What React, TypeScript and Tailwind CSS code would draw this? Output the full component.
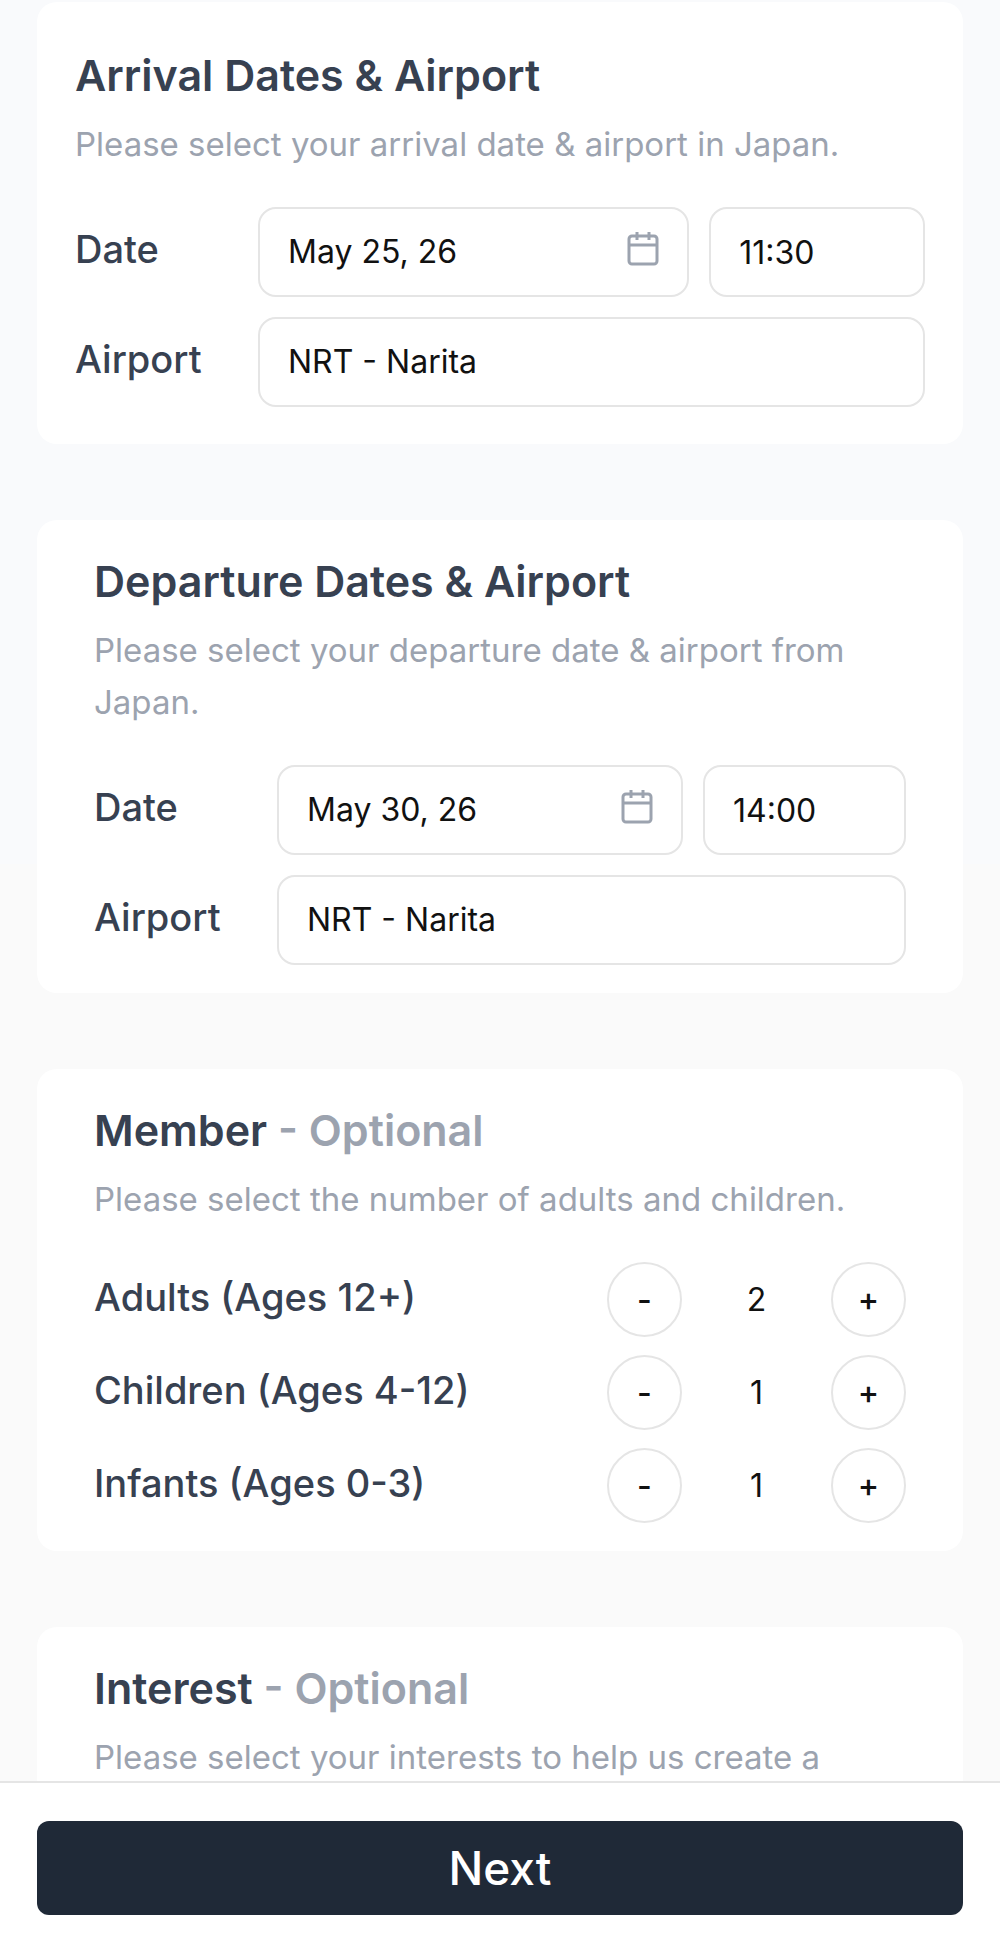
import { useState, type ReactNode } from 'react';
import clsx from 'clsx';

interface SectionProps {
  title: string;
  description: string;
  optional?: boolean;
  className?: string;
  children?: ReactNode;
}

function Section({ title, description, optional, className, children }: SectionProps) {
  return (
    <section className={clsx('shrink-0 rounded-[20px] bg-white', className)}>
      <h2 className="text-[43px] leading-16 font-semibold text-[#374151]">
        {title}
        {optional && <span className="text-[#9ca3af]"> - Optional</span>}
      </h2>
      <p className="mt-[11px] text-[33px] leading-[52px] text-[#9ca3af]">{description}</p>
      {children}
    </section>
  );
}

function CalendarIcon() {
  return (
    <svg
      viewBox="0 0 32 36"
      className="mb-1.5 h-9 w-8 shrink-0 text-[#9ca3af]"
      fill="none"
      stroke="currentColor"
      strokeWidth="3"
      aria-hidden="true"
    >
      <rect x="2" y="5" width="28" height="28" rx="3" />
      <path d="M2 14h28M10 1v8M22 1v8" />
    </svg>
  );
}

const labelClass = 'w-[183px] shrink-0 pb-1.5 text-[38px] leading-[44px] font-medium text-[#374151]';
const boxClass = 'h-[90px] w-full min-w-0 rounded-[18px] border-2 border-[#e5e5e5] bg-white px-7 text-[32px] text-[#111111]';

interface FlightFieldsProps {
  id: string;
  defaultDate: string;
  defaultTime: string;
}

function FlightFields({ id, defaultDate, defaultTime }: FlightFieldsProps) {
  const [date, setDate] = useState(defaultDate);
  const [time, setTime] = useState(defaultTime);

  return (
    <div className="mt-[37px] flex flex-col gap-5">
      <div className="flex items-center">
        <label htmlFor={`${id}-date`} className={labelClass}>Date</label>
        <div className="grid min-w-0 flex-1 grid-cols-[2fr_1fr] gap-5">
          <div className={clsx(boxClass, 'flex items-center')}>
            <input
              id={`${id}-date`}
              value={date}
              onChange={(e) => setDate(e.target.value)}
              className="min-w-0 flex-1 outline-none"
            />
            <CalendarIcon />
          </div>
          <input
            aria-label="Time"
            value={time}
            onChange={(e) => setTime(e.target.value)}
            className={boxClass}
          />
        </div>
      </div>
      <div className="flex items-center">
        <label htmlFor={`${id}-airport`} className={labelClass}>Airport</label>
        <select id={`${id}-airport`} className={clsx(boxClass, 'flex-1 appearance-none')}>
          <option>NRT - Narita</option>
        </select>
      </div>
    </div>
  );
}

const stepClass =
  'flex size-[75px] items-center justify-center rounded-full border-2 border-[#e5e5e5] text-[32px] font-medium text-[#111111]';

function Counter({ label, initial }: { label: string; initial: number }) {
  const [count, setCount] = useState(initial);

  return (
    <div className="flex items-center justify-between">
      <span className="pb-1.5 text-[38px] leading-[44px] font-medium text-[#374151]">{label}</span>
      <div className="flex items-center">
        <button
          aria-label={`Remove ${label}`}
          onClick={() => setCount(Math.max(0, count - 1))}
          className={stepClass}
        >
          -
        </button>
        <span className="w-[149px] text-center text-[32px] text-[#111111]">{count}</span>
        <button aria-label={`Add ${label}`} onClick={() => setCount(count + 1)} className={stepClass}>
          +
        </button>
      </div>
    </div>
  );
}

export default function App() {
  return (
    <div className="flex h-screen flex-col bg-[linear-gradient(#f9fafc_864px,#fafafa_864px)] font-['Inter',sans-serif]">
      <main className="flex min-h-0 flex-1 flex-col gap-[76px] overflow-y-auto px-[37px] pt-0.5 [scrollbar-width:none]">
        <Section
          title="Arrival Dates & Airport"
          description="Please select your arrival date & airport in Japan."
          className="px-[38px] pt-[41px] pb-[37px]"
        >
          <FlightFields id="arrival" defaultDate="May 25, 26" defaultTime="11:30" />
        </Section>

        <Section
          title="Departure Dates & Airport"
          description="Please select your departure date & airport from Japan."
          className="px-[57px] pt-[29px] pb-7"
        >
          <FlightFields id="departure" defaultDate="May 30, 26" defaultTime="14:00" />
        </Section>

        <Section
          title="Member"
          optional
          description="Please select the number of adults and children."
          className="px-[57px] pt-[29px] pb-7"
        >
          <div className="mt-[37px] flex flex-col gap-[18px]">
            <Counter label="Adults (Ages 12+)" initial={2} />
            <Counter label="Children (Ages 4-12)" initial={1} />
            <Counter label="Infants (Ages 0-3)" initial={1} />
          </div>
        </Section>

        <Section
          title="Interest"
          optional
          description="Please select your interests to help us create a"
          className="px-[57px] pt-[29px] pb-7"
        />
      </main>

      <footer className="border-t-2 border-[#e5e5e5] bg-white px-[37px] pt-[38px] pb-[22px]">
        <button className="h-[94px] w-full rounded-xl bg-[#1f2937] text-[46px] font-medium text-white">
          Next
        </button>
      </footer>
    </div>
  );
}
